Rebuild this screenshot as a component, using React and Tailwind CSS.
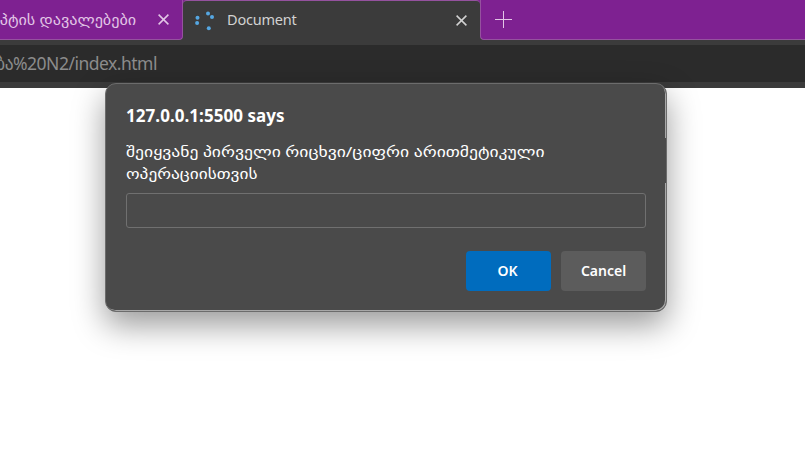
function CloseIcon() {
  return (
    <svg className="block h-[11px] w-[11px]" viewBox="0 0 11 11" fill="none" stroke="currentColor" strokeWidth="1.5">
      <path d="M.6.6l9.8 9.8M10.4.6L.6 10.4" />
    </svg>
  );
}

function Spinner() {
  return (
    <svg className="block h-5 w-5" viewBox="0 0 20 20" fill="#55a7e2">
      <circle cx="2.5" cy="6.7" r="2" />
      <circle cx="2.1" cy="12" r="2" />
      <circle cx="13" cy="2.5" r="2" />
      <circle cx="17" cy="6" r="2" />
      <circle cx="13.8" cy="17.2" r="2" />
    </svg>
  );
}

function TabStrip() {
  return (
    <div className="flex h-10 bg-[#3b3b3b]">
      <div className="flex h-10 w-[183px] shrink-0 items-center rounded-br-[4px] border-r border-b border-[#95529f] bg-[#7e2191] text-[#e2c6e6]">
        <div className="flex w-[136px] shrink-0 justify-end whitespace-nowrap text-[14px]">
          <span className="origin-right scale-x-[1.155]">პტის დავალებები</span>
        </div>
        <div className="ml-[22px]"><CloseIcon /></div>
      </div>
      <div className="flex h-10 w-[297px] shrink-0 bg-[#7e2191]">
        <div className="flex h-10 w-full items-center rounded-t-[4px] border-t border-[#95529f] bg-[#3b3b3b] text-[#d2d2d2]">
          <div className="ml-3"><Spinner /></div>
          <span className="relative -top-px ml-[12px] text-[14.5px] tracking-[-0.2px]">Document</span>
          <div className="mr-[13px] ml-auto"><CloseIcon /></div>
        </div>
      </div>
      <div className="flex h-10 grow rounded-bl-[4px] border-b border-l border-[#95529f] bg-[#7e2191] pt-[11px] pl-[14px] text-[#e2c6e6]">
        <svg className="block h-[17px] w-[17px]" viewBox="0 0 17 17" stroke="currentColor" strokeWidth="1">
          <path d="M0 8.5h17M8.5 0v17" />
        </svg>
      </div>
    </div>
  );
}

function Dialog() {
  return (
    <div className="absolute top-[83px] left-[105px] flex h-[229px] w-[562px] flex-col rounded-[11px] border border-[#6c6c6c] bg-[#4a4a4a] px-5 text-white shadow-[inset_-1px_-1px_0_#a8a8a8,0_13px_32px_rgba(0,0,0,0.4)]">
      <div className="absolute top-[54px] right-0 h-[45px] w-px bg-[#4a4a4a]" />
      <div className="mt-[20px] h-[24px] text-[17px] leading-6 font-bold tracking-[0.05px] whitespace-nowrap">
        <span>127.0.0.1:5500 says</span>
      </div>
      <div className="mt-[12px] text-[15px] leading-[22px] whitespace-nowrap">
        <div className="w-max origin-left scale-x-[1.173]">შეიყვანე პირველი რიცხვი/ციფრი არითმეტიკული</div>
        <div className="w-max origin-left scale-x-[1.155]">ოპერაციისთვის</div>
      </div>
      <div className="mt-[9px] h-[35px] rounded-[3px] border border-[#707070]" />
      <div className="mt-[23px] flex justify-end gap-[10px] text-[14px] font-semibold">
        <div className="flex h-10 w-[85px] items-center justify-center rounded-[4px] bg-[#006cbe] pr-[2px] pb-[2px]">OK</div>
        <div className="flex h-10 w-[85px] items-center justify-center rounded-[4px] bg-[#5c5c5c] pb-[2px]">Cancel</div>
      </div>
    </div>
  );
}

export default function App() {
  return (
    <div className="relative flex h-[467px] w-[805px] flex-col overflow-hidden bg-white font-['Noto_Sans','DejaVu_Sans',sans-serif]">
      <TabStrip />
      <div className="h-12 bg-[#3b3b3b] pt-[5px]">
        <div className="flex h-[37px] items-center bg-[#2b2b2b] text-[17.5px] text-[#8c8c8c]">
          <div className="flex w-[157px] justify-end whitespace-nowrap">
            <span className="tracking-[-0.5px]">ბა%20N2/index.html</span>
          </div>
        </div>
      </div>
      <Dialog />
    </div>
  );
}
